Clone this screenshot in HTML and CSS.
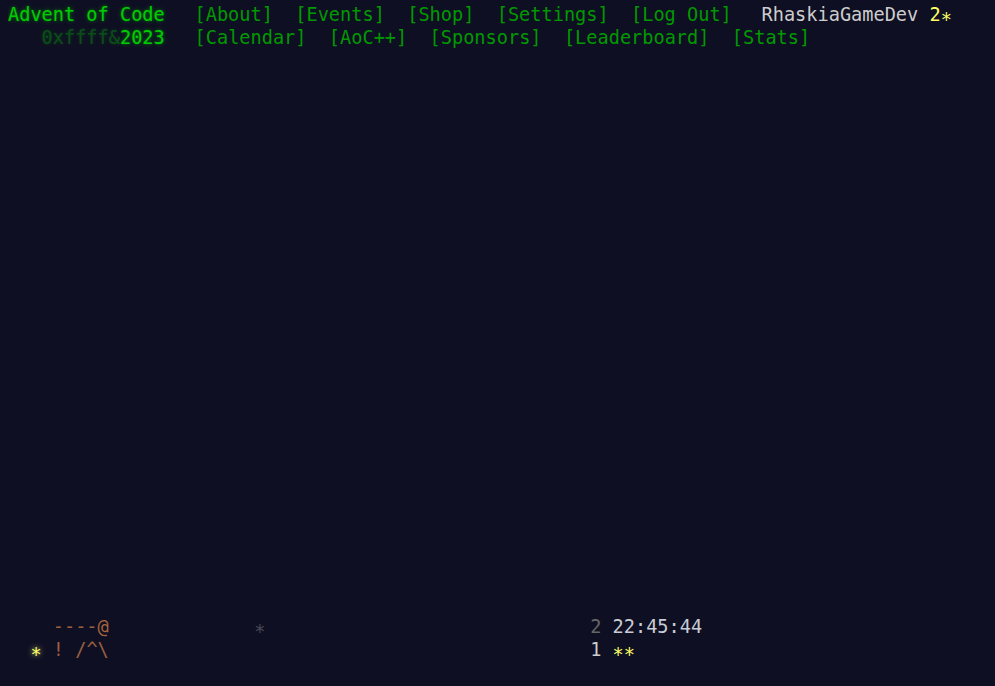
FILE: index.html
```html
<!DOCTYPE html>
<html lang="en">
<head>
<meta charset="utf-8">
<title>Advent of Code 2023</title>
<link rel="stylesheet" href="styles.css">
</head>
<body>
<header>
<div class="row"><h1 class="title-global"><a href="#">Advent of Code</a></h1>
<nav><ul><li><a href="#">[About]</a></li>
<li><a href="#">[Events]</a></li>
<li><a href="#">[Shop]</a></li>
<li><a href="#">[Settings]</a></li>
<li><a href="#">[Log Out]</a></li></ul></nav><div class="user">RhaskiaGameDev <span class="star-count">2<span class="ast">*</span></span></div></div>
<div class="row"><h1 class="title-event">&nbsp;&nbsp;&nbsp;<span class="title-event-wrap">0xffff&amp;</span><a href="#">2023</a></h1>
<nav><ul><li><a href="#">[Calendar]</a></li>
<li><a href="#">[AoC++]</a></li>
<li><a href="#">[Sponsors]</a></li>
<li><a href="#">[Leaderboard]</a></li>
<li><a href="#">[Stats]</a></li></ul></nav></div>
</header>
<main>
<pre class="calendar">























<span class="day">    <span class="art-brown">----</span><span class="art-at">@</span>             <span class="art-dim ast">*</span>                             <span class="day-num locked">2</span> <span class="countdown">22:45:44</span></span>
<span class="day">  <span class="mark-star ast">*</span> <span class="art-brown">!</span> <span class="art-ridge">/^\</span>                                           <span class="day-num">1</span> <span class="stars"><span class="ast">*</span><span class="ast">*</span></span></span></pre>
</main>
</body>
</html>
```
FILE: styles.css
```css
html, body {
  background: #0f0f23;
}

body {
  margin: 3px 8px 0;
  color: #cccccc;
  font-family: "DejaVu Sans Mono", "Liberation Mono", monospace;
  font-size: 18.6px;
  line-height: 23px;
}

a {
  color: #009900;
  text-decoration: none;
}

header {
  white-space: nowrap;
  margin-bottom: 2em;
}

header h1 {
  display: inline-block;
  margin: 0;
  padding-right: 1em;
  font-size: 1em;
  font-weight: normal;
}

header h1 a,
header h1 span {
  display: inline-block;
  color: #00cc00;
  text-shadow: 0 0 2px rgba(0, 204, 0, 0.4), 0 0 5px rgba(0, 204, 0, 0.45);
}

header h1.title-event .title-event-wrap {
  opacity: 0.33;
  white-space: pre;
}

header nav {
  display: inline-block;
}

header nav ul {
  list-style-type: none;
  padding: 0;
  margin: 0;
  display: inline-block;
}

header nav li {
  display: inline-block;
  padding: 0 0.6em 0 0;
}

header .user {
  display: inline-block;
  color: #cccccc;
  padding-left: 1em;
}

.star-count {
  color: #ffff66;
}

/* asterisks sit low, like a star glyph */
.ast {
  display: inline-block;
  transform: translateY(0.25em);
}

.calendar {
  margin: 0;
  font: inherit;
  line-height: 23px;
  white-space: pre;
}

.calendar .art-brown {
  color: #9c5d3c;
}

.calendar .art-at {
  color: #a8653c;
}

.calendar .art-ridge {
  color: #9a5f40;
}

.calendar .art-dim {
  color: #4a4a58;
}

.calendar .mark-star {
  color: #ffff66;
  text-shadow: 0 0 5px rgba(255, 255, 102, 0.7), 0 0 8px rgba(255, 255, 255, 0.3);
}

.calendar .day-num {
  color: #cccccc;
}

.calendar .day-num.locked {
  color: #666666;
}

.calendar .countdown {
  color: #c8ccd4;
}

.calendar .stars {
  color: #ffff66;
}
```
